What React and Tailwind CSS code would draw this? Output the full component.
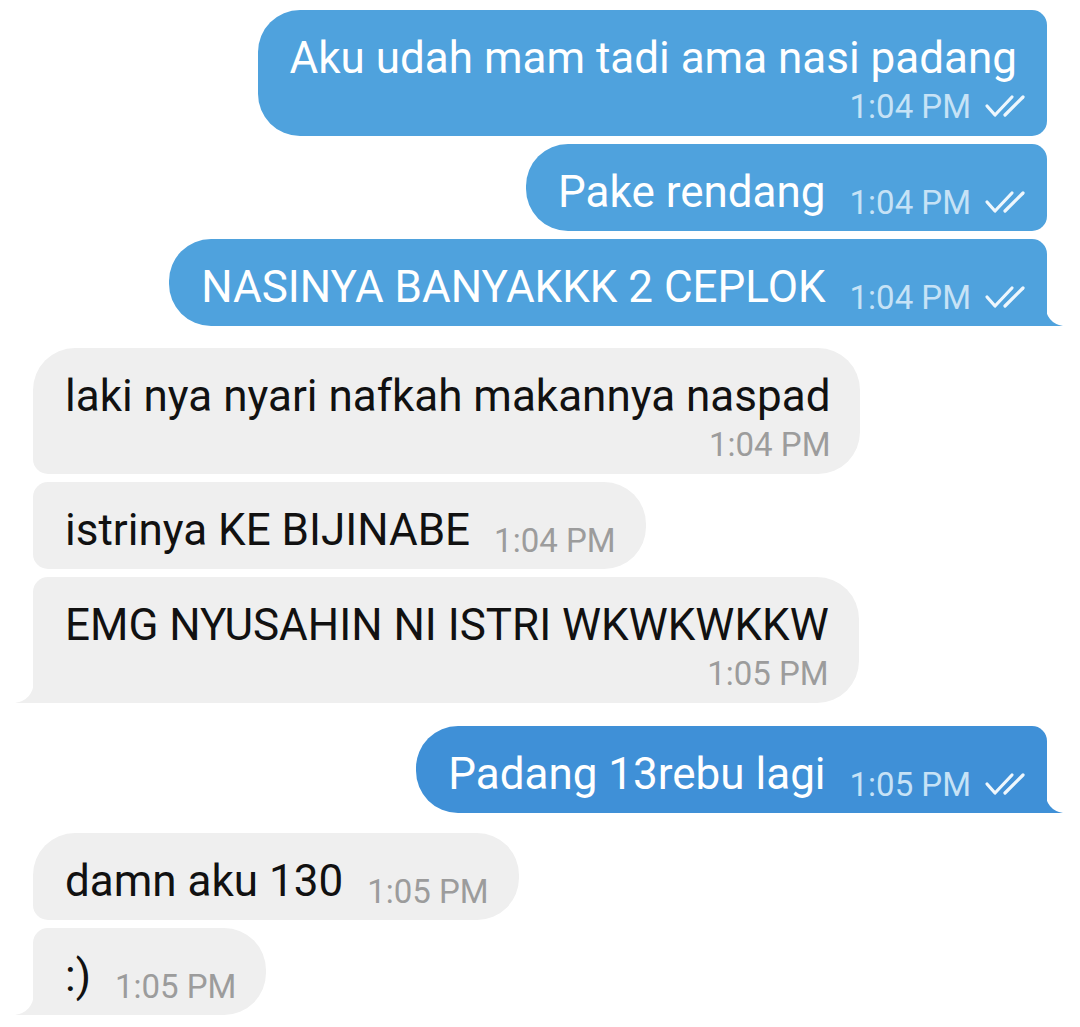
import React from "react";

const messages = [
  { out: true, text: "Aku udah mam tadi ama nasi padang", time: "1:04 PM", wrap: true },
  { out: true, text: "Pake rendang", time: "1:04 PM", gap: 8 },
  { out: true, text: "NASINYA BANYAKKK 2 CEPLOK", time: "1:04 PM", tail: true, gap: 8 },
  { out: false, text: "laki nya nyari nafkah makannya naspad", time: "1:04 PM", wrap: true, first: true, gap: 22 },
  { out: false, text: "istrinya KE BIJINABE", time: "1:04 PM", gap: 8 },
  { out: false, text: "EMG NYUSAHIN NI ISTRI WKWKWKKW", time: "1:05 PM", wrap: true, tail: true, gap: 8 },
  { out: true, text: "Padang 13rebu lagi", time: "1:05 PM", tail: true, dark: true, gap: 23 },
  { out: false, text: "damn aku 130", time: "1:05 PM", first: true, gap: 20 },
  { out: false, text: ":)", time: "1:05 PM", tail: true, gap: 8 },
];

const gapCls = { 8: "mt-[8px]", 20: "mt-[20px]", 22: "mt-[22px]", 23: "mt-[23px]" };

function Checks() {
  return (
    <svg width="44" height="24" viewBox="0 0 44 24" fill="none" className="ml-[13px] mb-[7px] shrink-0">
      <path d="M3 12 L11 21 L28 3" stroke="#eef7fd" strokeWidth="3.2" strokeLinecap="round" strokeLinejoin="round" />
      <path d="M21 21 L39 3" stroke="#eef7fd" strokeWidth="3.2" strokeLinecap="round" />
    </svg>
  );
}

function Tail({ out, color }) {
  if (out) {
    return (
      <svg width="18" height="22" viewBox="0 0 18 22" className="absolute bottom-0 right-[-16px]">
        <path d="M0 0 Q1 19 18 22 L0 22 Z" fill={color} />
      </svg>
    );
  }
  return (
    <svg width="19" height="22" viewBox="0 0 19 22" className="absolute bottom-0 left-[-18px]">
      <path d="M19 0 Q18 19 0 22 L19 22 Z" fill={color} />
    </svg>
  );
}

function Time({ m }) {
  return (
    <div className="flex items-end shrink-0">
      <span
        className={
          "text-[33px] leading-[36px] whitespace-nowrap " +
          (m.out ? "text-[#c6e2f6]" : "text-[#9c9c9c]")
        }
      >
        {m.time}
      </span>
      {m.out && <Checks />}
    </div>
  );
}

function Bubble({ m }) {
  const color = m.out ? (m.dark ? "#3f90d7" : "#4fa2dd") : "#efefef";
  let radius;
  if (m.out) {
    radius = "rounded-l-[42px] rounded-tr-[15px] " + (m.tail ? "rounded-br-none" : "rounded-br-[15px]");
  } else {
    radius =
      "rounded-r-[42px] " +
      (m.first ? "rounded-tl-[42px] " : "rounded-tl-[15px] ") +
      (m.tail ? "rounded-bl-none" : "rounded-bl-[15px]");
  }
  const textCls =
    "text-[44px] leading-[52px] whitespace-nowrap " + (m.out ? "text-white" : "text-[#111111]");

  return (
    <div className={"flex " + (m.out ? "justify-end" : "justify-start")}>
      <div
        className={
          "relative pt-[22px] " +
          (m.wrap ? "pb-[11px] " : "pb-[10px] ") +
          radius +
          " " +
          (m.out ? "pl-[32px] pr-[19px]" : "pl-[32px] pr-[30px]")
        }
        style={{ backgroundColor: color }}
      >
        {m.wrap ? (
          <div className="flex flex-col">
            <div className={textCls + (m.out ? " pr-[11px]" : "")}>{m.text}</div>
            <div className="flex justify-end mt-[5px]">
              <Time m={m} />
            </div>
          </div>
        ) : (
          <div className="flex items-end">
            <div className={textCls + " mb-[3px]"}>{m.text}</div>
            <div className="ml-[24px]">
              <Time m={m} />
            </div>
          </div>
        )}
        {m.tail && <Tail out={m.out} color={color} />}
      </div>
    </div>
  );
}

export default function App() {
  return (
    <div
      className="w-[1080px] h-[1027px] bg-white overflow-hidden px-[33px] pt-[10px]"
      style={{ fontFamily: "Roboto, 'Liberation Sans', sans-serif" }}
    >
      <div className="flex flex-col">
        {messages.map((m, i) => (
          <div key={i} className={m.gap ? gapCls[m.gap] : ""}>
            <Bubble m={m} />
          </div>
        ))}
      </div>
    </div>
  );
}
